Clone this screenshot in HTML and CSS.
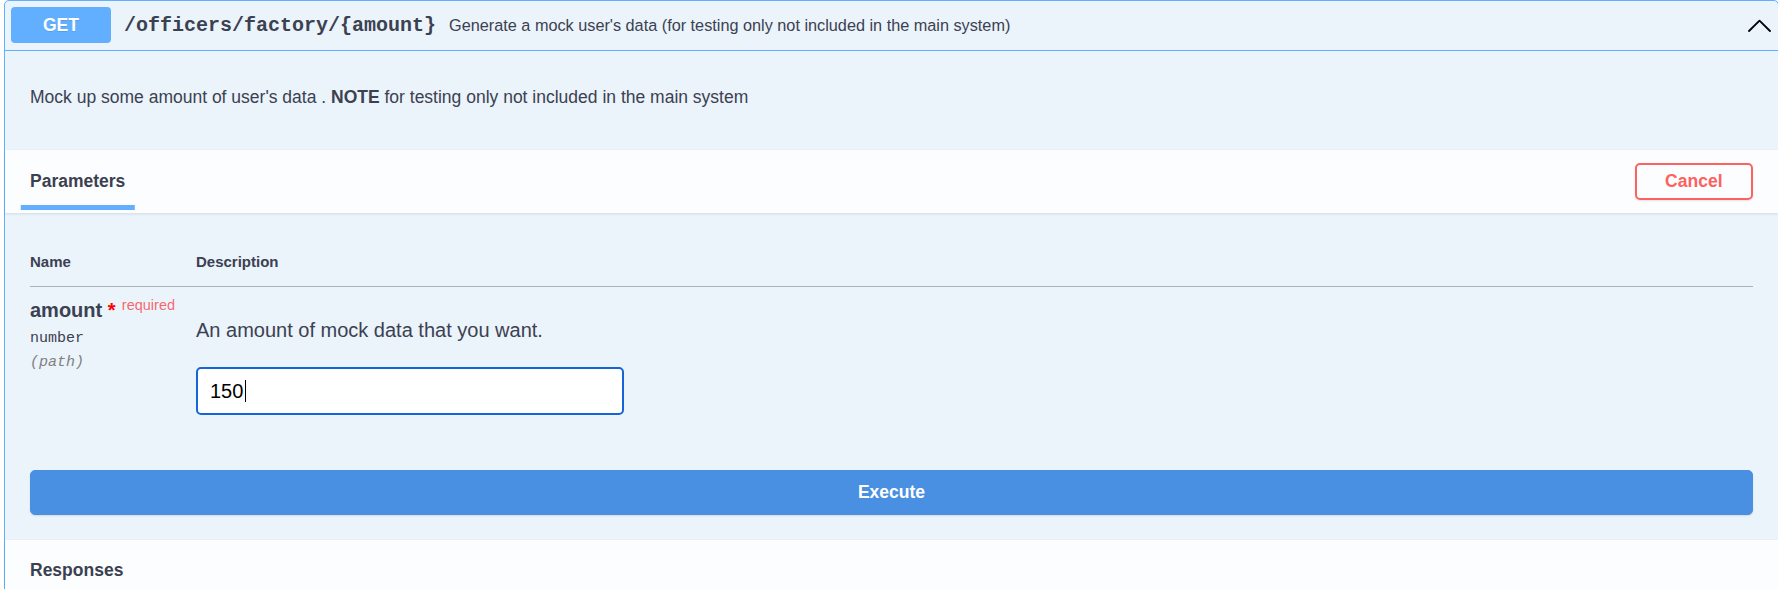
FILE: index.html
```html
<!DOCTYPE html>
<html lang="en">
<head>
<meta charset="utf-8">
<title>GET /officers/factory/{amount}</title>
<link rel="stylesheet" href="styles.css">
</head>
<body>
<div class="opblock">
  <div class="summary">
    <span class="method">GET</span>
    <span class="path">/officers/factory/{amount}</span>
    <span class="summary-desc">Generate a mock user's data (for testing only not included in the main system)</span>
    <svg class="arrow" viewBox="0 0 20 20" aria-hidden="true">
      <polyline points="1.6,14.4 10,6.1 18.4,14.4" />
    </svg>
  </div>
  <div class="description">
    <p>Mock up some amount of user's data . <strong>NOTE</strong> for testing only not included in the main system</p>
  </div>
  <div class="section-header">
    <h4 class="tab"><span>Parameters</span></h4>
    <button class="btn cancel" type="button">Cancel</button>
  </div>
  <div class="table-container">
    <table class="parameters">
      <colgroup><col class="col-name"><col></colgroup>
      <thead>
        <tr><th>Name</th><th>Description</th></tr>
      </thead>
      <tbody>
        <tr>
          <td>
            <div class="param-name">amount<span class="star">&nbsp;*</span><span class="req">required</span></div>
            <div class="param-type">number</div>
            <div class="param-in">(path)</div>
          </td>
          <td>
            <p class="param-desc">An amount of mock data that you want.</p>
            <div class="input-wrap">
              <input class="param-input" type="text" value="150">
              <span class="caret"></span>
            </div>
          </td>
        </tr>
      </tbody>
    </table>
  </div>
  <div class="execute-wrapper">
    <button class="btn execute" type="button">Execute</button>
  </div>
  <div class="section-header">
    <h4>Responses</h4>
  </div>
</div>
</body>
</html>
```
FILE: styles.css
```css
html, body {
  margin: 0;
  padding: 0;
  overflow: hidden;
  background: #ffffff;
}

body {
  font-family: "Liberation Sans", Arial, sans-serif;
  color: #3b4151;
}

.opblock {
  box-sizing: border-box;
  margin-left: 4px;
  width: 1775px;
  border: 1px solid #61affe;
  border-radius: 5px;
  background: #ebf3fb;
}

.summary {
  display: flex;
  align-items: center;
  padding: 6px 6px 7px 6px;
  border-bottom: 1px solid #61affe;
}

.method {
  flex: none;
  width: 100px;
  height: 36px;
  display: flex;
  align-items: center;
  justify-content: center;
  background: #61affe;
  color: #ffffff;
  font-weight: 700;
  font-size: 17.5px;
  border-radius: 4px;
  text-shadow: 0 1px 0 rgba(0, 0, 0, 0.1);
}

.path {
  font-family: "Liberation Mono", "Courier New", monospace;
  font-weight: 700;
  font-size: 20px;
  padding: 0 13px 0 13px;
  color: #3b4151;
}

.summary-desc {
  flex: 1;
  font-size: 16.25px;
  color: #3b4151;
}

.arrow {
  flex: none;
  width: 25px;
  height: 25px;
  fill: none;
  stroke: #000000;
  stroke-width: 1.45;
  stroke-linecap: round;
  stroke-linejoin: round;
}

.description {
  padding: 35px 25px 42px;
}

.description p {
  margin: 0;
  font-size: 17.5px;
  line-height: 22px;
}

.section-header {
  display: flex;
  align-items: center;
  justify-content: space-between;
  box-sizing: border-box;
  min-height: 62.5px;
  padding: 0 25px;
  background: rgba(255, 255, 255, 0.8);
  box-shadow: 0 1.25px 2.5px rgba(0, 0, 0, 0.1);
}

.section-header h4 {
  margin: 0;
  font-size: 17.5px;
  font-weight: 700;
  color: #3b4151;
}

.tab span {
  position: relative;
}

.tab span::after {
  content: "";
  position: absolute;
  left: 50%;
  bottom: -19.5px;
  width: 120%;
  height: 5px;
  transform: translateX(-50%);
  background: #61affe;
}

.btn {
  font-family: "Liberation Sans", Arial, sans-serif;
  font-weight: 700;
  font-size: 17.5px;
  border-radius: 5px;
  cursor: pointer;
  box-shadow: 0 1px 2px rgba(0, 0, 0, 0.1);
}

.cancel {
  box-sizing: border-box;
  height: 37px;
  padding: 0 28.5px;
  background: transparent;
  border: 2.5px solid #ff6060;
  color: #ff6060;
}

.table-container {
  padding: 25px 25px 0;
}

.parameters {
  width: 100%;
  border-collapse: collapse;
  table-layout: fixed;
}

.parameters .col-name {
  width: 166px;
}

.parameters th {
  text-align: left;
  font-size: 15px;
  font-weight: 700;
  line-height: 17px;
  padding: 15px 0 16px;
  border-bottom: 1px solid rgba(59, 65, 81, 0.2);
}

.parameters td {
  vertical-align: top;
  padding: 12.5px 0;
}

.param-name {
  font-size: 20px;
  font-weight: 700;
  line-height: 23px;
}

.star {
  color: #ff0000;
}

.req {
  position: relative;
  top: -7.5px;
  padding: 0 6.25px;
  font-size: 14.5px;
  font-weight: 400;
  color: rgba(255, 0, 0, 0.6);
}

.param-type {
  font-family: "Liberation Mono", "Courier New", monospace;
  font-size: 15px;
  line-height: 17px;
  padding: 6.25px 0;
}

.param-in {
  font-family: "Liberation Mono", "Courier New", monospace;
  font-size: 15px;
  line-height: 17px;
  font-style: italic;
  color: #808080;
}

.param-desc {
  margin: 20px 0 0;
  font-size: 20px;
  line-height: 23px;
}

.input-wrap {
  position: relative;
  width: 428px;
  margin-top: 25px;
}

.param-input {
  display: block;
  box-sizing: border-box;
  width: 428px;
  height: 48px;
  padding: 0 12px;
  border: 2px solid #1565d8;
  border-radius: 5px;
  outline: none;
  background: #ffffff;
  font-family: "Liberation Sans", Arial, sans-serif;
  font-size: 20px;
  color: #000000;
}

.caret {
  position: absolute;
  left: 49px;
  top: 13px;
  width: 1px;
  height: 22px;
  background: #000000;
}

.execute-wrapper {
  padding: 42px 25px 25px;
}

.execute {
  display: block;
  width: 100%;
  height: 45px;
  background: #4990e2;
  border: 1px solid #4990e2;
  color: #ffffff;
}
```
